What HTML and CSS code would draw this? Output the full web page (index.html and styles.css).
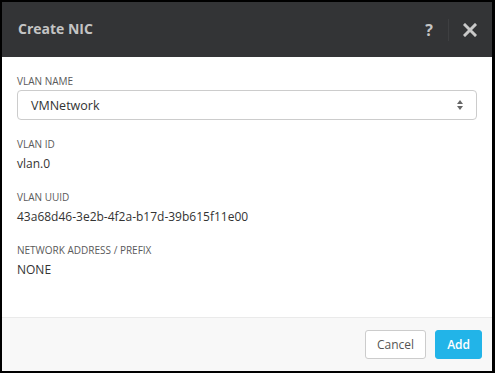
FILE: index.html
```html
<!DOCTYPE html>
<html lang="en">
<head>
  <meta charset="UTF-8">
  <title>Create NIC</title>
  <link rel="stylesheet" href="styles.css">
</head>
<body>
  <div class="modal">
    <!-- Cabecera -->
    <div class="modal-header">
      <div class="modal-title">Create NIC</div>
      <div class="header-actions">
        <span class="help">?</span>
        <span class="divider"></span>
        <svg class="close" width="14" height="14" viewBox="0 0 14 14">
          <path d="M2 2 L12 12 M12 2 L2 12" stroke="#c9c9c9" stroke-width="3" stroke-linecap="square"/>
        </svg>
      </div>
    </div>

    <!-- Contenido -->
    <div class="modal-body">
      <div class="field field-select">
        <div class="label">VLAN NAME</div>
        <div class="select">
          <span>VMNetwork</span>
          <svg width="8" height="12" viewBox="0 0 8 12">
            <path d="M4 1 L7 5 L1 5 Z M4 11 L7 7 L1 7 Z" fill="#666"/>
          </svg>
        </div>
      </div>
      <div class="field">
        <div class="label">VLAN ID</div>
        <div class="value">vlan.0</div>
      </div>
      <div class="field">
        <div class="label">VLAN UUID</div>
        <div class="value">43a68d46-3e2b-4f2a-b17d-39b615f11e00</div>
      </div>
      <div class="field">
        <div class="label">NETWORK ADDRESS / PREFIX</div>
        <div class="value">NONE</div>
      </div>
    </div>

    <!-- Pie -->
    <div class="modal-footer">
      <button class="btn btn-cancel">Cancel</button>
      <button class="btn btn-add">Add</button>
    </div>
  </div>
</body>
</html>
```

FILE: styles.css
```css
/* Estilos generales */
body {
  margin: 0;
  font-family: 'Open Sans', 'Liberation Sans', sans-serif;
  background: #000;
}

.modal {
  width: 495px;
  height: 373px;
  box-sizing: border-box;
  border: 2px solid #000;
  border-right-width: 3px;
  display: flex;
  flex-direction: column;
  background: #fff;
}

/* Cabecera */
.modal-header {
  height: 55px;
  background: #333436;
  display: flex;
  align-items: center;
  justify-content: space-between;
  padding: 0 15px 0 16px;
}

.modal-title {
  color: #c4c4c4;
  font-size: 14px;
  font-weight: 700;
  margin-top: -2px;
}

.header-actions {
  display: flex;
  align-items: center;
}

.help {
  color: #c4c4c4;
  font-size: 16px;
  font-weight: 700;
}

.divider {
  width: 1px;
  height: 22px;
  background: #3e3f41;
  margin: 0 14px 0 15px;
}

.close {
  display: block;
}

/* Contenido */
.modal-body {
  flex: 1;
  padding: 17px 15px 0 15px;
}

.field {
  margin-bottom: 18px;
}

.field-select {
  margin-bottom: 17px;
}

.label {
  font-size: 10px;
  color: #5a5a5a;
  line-height: 14px;
  margin-bottom: 4px;
}

.field-select .label {
  margin-bottom: 2px;
}

.value {
  font-size: 12px;
  color: #333;
  line-height: 17px;
}

.select {
  height: 30px;
  box-sizing: border-box;
  border: 1px solid #ccc;
  border-radius: 4px;
  display: flex;
  align-items: center;
  justify-content: space-between;
  padding: 0 12px 0 13px;
  font-size: 12.5px;
  color: #333;
}

/* Pie */
.modal-footer {
  height: 53px;
  background: #f8f8f8;
  border-top: 1px solid #eaeaea;
  display: flex;
  align-items: center;
  justify-content: flex-end;
  gap: 9px;
  padding: 0 10px;
}

.btn {
  height: 29px;
  border-radius: 3px;
  font-family: inherit;
  font-size: 12px;
  padding: 0 11px;
  cursor: pointer;
}

.btn-cancel {
  background: #fff;
  border: 1px solid #ccc;
  color: #555;
}

.btn-add {
  background: #22b4e8;
  border: 1px solid #22b4e8;
  color: #fff;
  font-weight: 600;
}
```
